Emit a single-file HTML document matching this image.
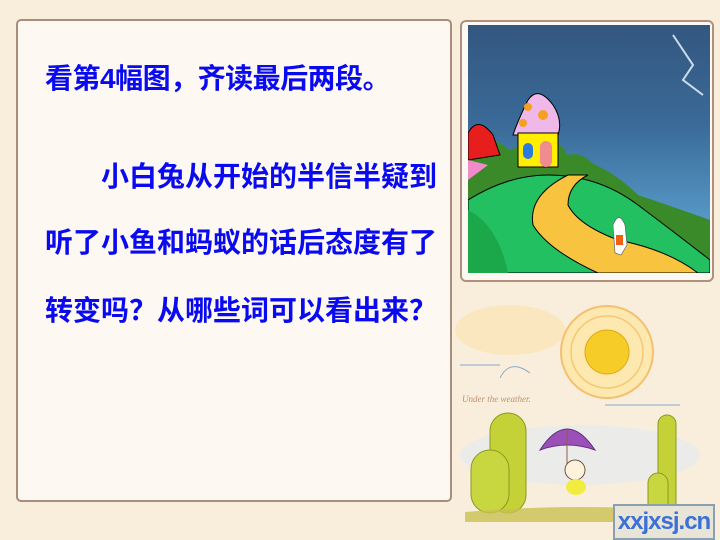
<!DOCTYPE html>
<html><head><meta charset="utf-8"><style>
html,body{margin:0;padding:0}
body{width:720px;height:540px;background:#f9eedb;position:relative;overflow:hidden;font-family:"Liberation Sans","Noto Sans CJK SC",sans-serif}
.panel{position:absolute;left:16px;top:19px;width:432px;height:479px;border:2px solid #a88c7c;border-radius:5px;background:#fdf8f1}
.t{position:absolute;color:#0a0af0;font-weight:bold;font-size:28px;line-height:32px;white-space:nowrap}
.frame{position:absolute;left:460px;top:20px;width:250px;height:258px;border:2px solid #b0907c;border-radius:6px;background:#fdf8f1}
</style></head><body>
<div class="panel"></div>
<div class="t" style="left:45px;top:63px;letter-spacing:-0.5px">看第4幅图，齐读最后两段。</div>
<div class="t" style="left:101px;top:161px">小白兔从开始的半信半疑到</div>
<div class="t" style="left:45px;top:227px">听了小鱼和蚂蚁的话后态度有了</div>
<div class="t" style="left:45px;top:295px">转变吗？从哪些词可以看出来？</div>
<div class="frame"></div>
<svg style="position:absolute;left:468px;top:25px" width="242" height="248" viewBox="0 0 242 248">
<defs><linearGradient id="sk" x1="0" y1="0" x2="0" y2="1"><stop offset="0" stop-color="#33577f"/><stop offset="0.4" stop-color="#3a6a98"/><stop offset="1" stop-color="#64b2e2"/></linearGradient></defs>
<rect width="242" height="248" fill="url(#sk)"/>
<path d="M205 10 L225 40 L215 55 L235 70" stroke="#cde" stroke-width="2" fill="none"/>
<path d="M0 120 Q30 110 40 125 L60 120 Q80 100 100 130 Q140 140 170 170 Q200 180 242 195 L242 248 L0 248Z" fill="#3a8a2a"/>
<path d="M100 130 Q120 125 130 150 Q150 160 170 175 Q190 185 242 200 L242 248 L0 248Z" fill="#3a8a2a"/>
<path d="M0 175 Q40 150 80 150 Q130 150 170 180 Q210 210 242 235 L242 248 L0 248Z" fill="#22c060" stroke="#000" stroke-width="1"/>
<path d="M0 185 Q30 200 40 248 L0 248Z" fill="#1aa84a"/>
<path d="M100 150 Q60 170 65 200 Q80 225 130 248 L230 248 Q200 225 150 215 Q110 200 100 180 Q100 160 120 150Z" fill="#f8c440" stroke="#000" stroke-width="1"/>
<path d="M45 110 Q50 95 60 75 Q70 60 85 80 Q95 95 90 110Z" fill="#f0b8e8" stroke="#000"/>
<circle cx="60" cy="82" r="4" fill="#f4a020"/><circle cx="75" cy="90" r="5" fill="#f4a020"/><circle cx="55" cy="98" r="4" fill="#f4a020"/>
<path d="M50 108 L90 108 L90 142 L50 142Z" fill="#ffee00" stroke="#000"/>
<rect x="55" y="118" width="10" height="16" rx="5" fill="#2a7ae0"/>
<rect x="72" y="116" width="12" height="26" rx="6" fill="#f08c90"/>
<path d="M0 108 Q10 90 25 110 L32 130 L0 135Z" fill="#e81e1e" stroke="#000"/>
<path d="M0 135 L20 140 L0 155Z" fill="#f08ac8"/>
<path d="M145 200 q6 -15 12 0 l2 20 l-6 10 l-6 -2Z" fill="#fff" stroke="#666" stroke-width="0.7"/>
<rect x="148" y="210" width="7" height="10" fill="#f06010"/>
</svg>
<svg style="position:absolute;left:450px;top:290px" width="270" height="250" viewBox="0 0 270 250">
<ellipse cx="60" cy="40" rx="55" ry="25" fill="#fbe4b4" opacity="0.7"/>
<ellipse cx="130" cy="165" rx="120" ry="30" fill="#e6eaf0" opacity="0.7"/>
<circle cx="157" cy="62" r="46" fill="#fde8b0" stroke="#f4c070" stroke-width="2"/>
<circle cx="157" cy="62" r="36" fill="none" stroke="#f4c878" stroke-width="1.5"/>
<circle cx="157" cy="62" r="22" fill="#f6cc28" stroke="#e4aa10"/>
<text x="12" y="112" font-family="Liberation Serif,serif" font-style="italic" font-size="9" fill="#c09070">Under the weather.</text>
<path d="M10 75 h40 M155 115 h75 M50 88 q10 -20 30 -5" stroke="#8ac" fill="none"/>
<rect x="40" y="123" width="36" height="100" rx="18" fill="#c4d238" stroke="#8a9a20"/>
<rect x="21" y="160" width="38" height="63" rx="19" fill="#c8d640" stroke="#8a9a20"/>
<rect x="208" y="125" width="18" height="98" rx="9" fill="#c4d238" stroke="#8a9a20"/>
<rect x="198" y="183" width="20" height="40" rx="10" fill="#c8d640" stroke="#8a9a20"/>
<path d="M90 160 Q117 118 145 160 Q117 150 90 160Z" fill="#9a50b8" stroke="#603080"/>
<line x1="117" y1="140" x2="117" y2="185" stroke="#906040"/>
<circle cx="125" cy="180" r="10" fill="#fff2dc" stroke="#654"/>
<ellipse cx="126" cy="197" rx="10" ry="8" fill="#f0ec40"/>
<path d="M15 222 Q130 212 250 222 L250 232 L15 232Z" fill="#c8c050" opacity="0.8"/>
</svg>
<div style="position:absolute;left:613px;top:504px;width:98px;height:32px;border:2px solid #8aa0b0;background:#e8e4d8;color:#3a70d8;font:bold 24px 'Liberation Sans',sans-serif;line-height:32px;text-align:center;letter-spacing:-1px">xxjxsj.cn</div>
</body></html>
